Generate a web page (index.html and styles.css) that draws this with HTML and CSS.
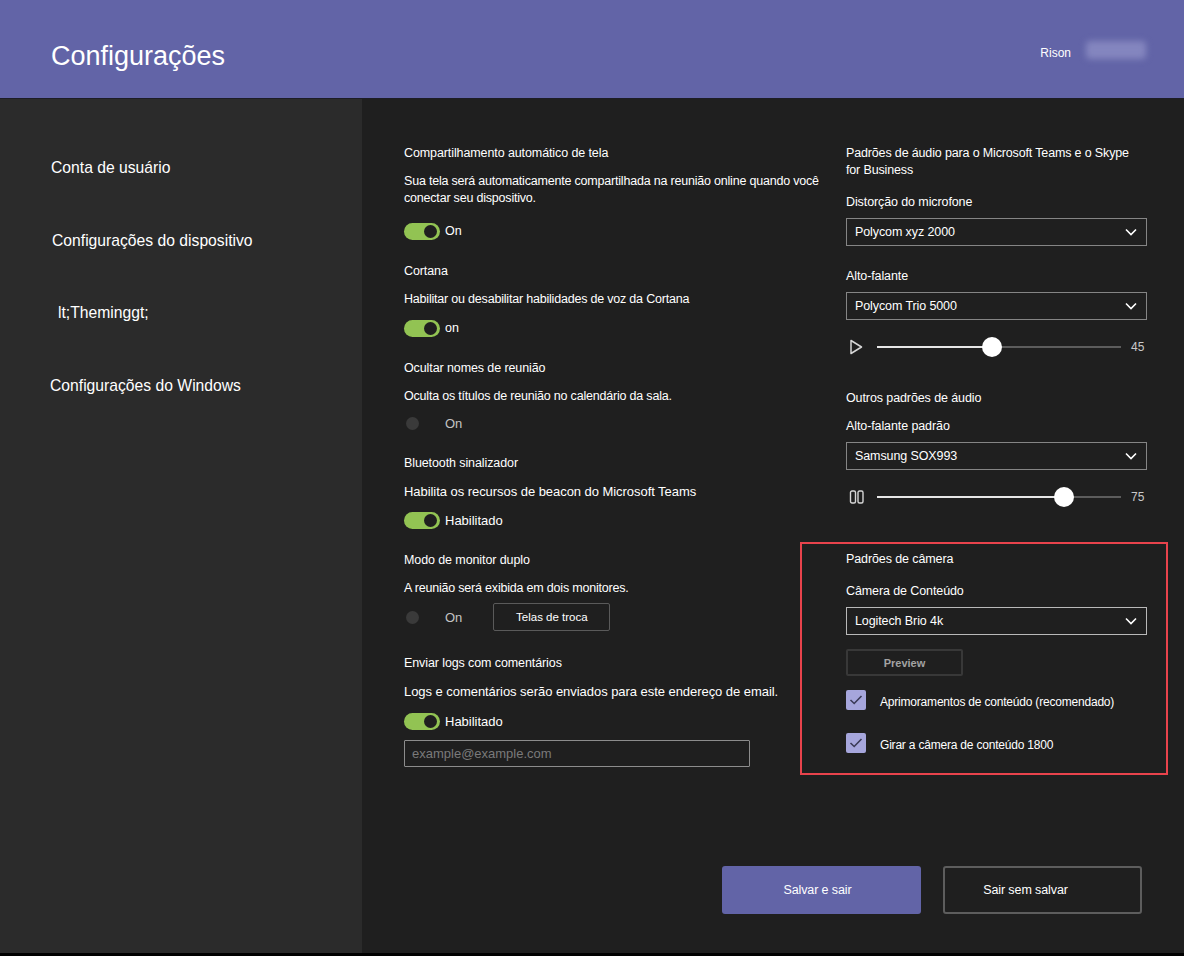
FILE: index.html
```html
<!DOCTYPE html>
<html lang="pt">
<head>
<meta charset="utf-8">
<title>Configurações</title>
<link rel="stylesheet" href="styles.css">
</head>
<body>
<div class="app">
  <header class="topbar">
    <h1 class="title">Configurações</h1>
    <div class="user">
      <span class="user-name">Rison</span>
      <span class="user-blur"></span>
    </div>
  </header>
  <div class="body">
    <nav class="sidebar">
      <div class="nav-item">Conta de usuário</div>
      <div class="nav-item nav-item-b">Configurações do dispositivo</div>
      <div class="nav-item nav-item-c">lt;Theminggt;</div>
      <div class="nav-item nav-item-d">Configurações do Windows</div>
    </nav>
    <main class="main">
      <div class="columns">
        <section class="col-left">
          <div class="setting">
            <div class="s-title">Compartilhamento automático de tela</div>
            <div class="s-desc">Sua tela será automaticamente compartilhada na reunião online quando você conectar seu dispositivo.</div>
            <div class="toggle-row toggle-row-first">
              <span class="toggle on"><span class="knob"></span></span>
              <span class="toggle-label">On</span>
            </div>
          </div>
          <div class="setting">
            <div class="s-title">Cortana</div>
            <div class="s-desc">Habilitar ou desabilitar habilidades de voz da Cortana</div>
            <div class="toggle-row">
              <span class="toggle on"><span class="knob"></span></span>
              <span class="toggle-label">on</span>
            </div>
          </div>
          <div class="setting">
            <div class="s-title">Ocultar nomes de reunião</div>
            <div class="s-desc">Oculta os títulos de reunião no calendário da sala.</div>
            <div class="toggle-row toggle-row-tight">
              <span class="toggle off"><span class="knob"></span></span>
              <span class="toggle-label muted">On</span>
            </div>
          </div>
          <div class="setting">
            <div class="s-title">Bluetooth sinalizador</div>
            <div class="s-desc s-desc-lg">Habilita os recursos de beacon do Microsoft Teams</div>
            <div class="toggle-row">
              <span class="toggle on"><span class="knob"></span></span>
              <span class="toggle-label lg">Habilitado</span>
            </div>
          </div>
          <div class="setting setting-dual">
            <div class="s-title">Modo de monitor duplo</div>
            <div class="s-desc">A reunião será exibida em dois monitores.</div>
            <div class="toggle-row">
              <span class="toggle off"><span class="knob"></span></span>
              <span class="toggle-label muted">On</span>
              <button class="btn-swap" type="button">Telas de troca</button>
            </div>
          </div>
          <div class="setting">
            <div class="s-title">Enviar logs com comentários</div>
            <div class="s-desc s-desc-lg">Logs e comentários serão enviados para este endereço de email.</div>
            <div class="toggle-row toggle-row-logs">
              <span class="toggle on"><span class="knob"></span></span>
              <span class="toggle-label lg">Habilitado</span>
            </div>
            <input class="email" type="text" placeholder="example@example.com">
          </div>
        </section>

        <section class="col-right">
          <div class="r-title">Padrões de áudio para o Microsoft Teams e o Skype for Business</div>
          <div class="label label-first">Distorção do microfone</div>
          <div class="select">
            <span>Polycom xyz 2000</span>
            <svg class="chev" width="12" height="8" viewBox="0 0 12 8"><path d="M1 1.5 L6 6.5 L11 1.5" fill="none" stroke="#ffffff" stroke-width="1.6"/></svg>
          </div>
          <div class="label label-gap">Alto-falante</div>
          <div class="select">
            <span>Polycom Trio 5000</span>
            <svg class="chev" width="12" height="8" viewBox="0 0 12 8"><path d="M1 1.5 L6 6.5 L11 1.5" fill="none" stroke="#ffffff" stroke-width="1.6"/></svg>
          </div>
          <div class="slider-row">
            <span class="slider-icon">
              <svg width="14" height="16" viewBox="0 0 14 16"><path d="M2 1.5 L12.5 8 L2 14.5 Z" fill="none" stroke="#d6d6d6" stroke-width="1.5" stroke-linejoin="round"/></svg>
            </span>
            <div class="slider">
              <div class="slider-fill" style="width:47%"></div>
              <div class="slider-thumb" style="left:47%"></div>
            </div>
            <span class="slider-value">45</span>
          </div>

          <div class="label label-section">Outros padrões de áudio</div>
          <div class="label label-sub">Alto-falante padrão</div>
          <div class="select">
            <span>Samsung SOX993</span>
            <svg class="chev" width="12" height="8" viewBox="0 0 12 8"><path d="M1 1.5 L6 6.5 L11 1.5" fill="none" stroke="#ffffff" stroke-width="1.6"/></svg>
          </div>
          <div class="slider-row">
            <span class="slider-icon">
              <svg width="16" height="14" viewBox="0 0 16 14"><rect x="1.5" y="1" width="5" height="12" rx="1.5" fill="none" stroke="#d6d6d6" stroke-width="1.4"/><rect x="9" y="1" width="5" height="12" rx="1.5" fill="none" stroke="#d6d6d6" stroke-width="1.4"/></svg>
            </span>
            <div class="slider">
              <div class="slider-fill" style="width:76.6%"></div>
              <div class="slider-thumb" style="left:76.6%"></div>
            </div>
            <span class="slider-value">75</span>
          </div>

          <div class="camera-box">
            <div class="label">Padrões de câmera</div>
            <div class="label label-first">Câmera de Conteúdo</div>
            <div class="select select-focus">
              <span>Logitech Brio 4k</span>
              <svg class="chev" width="12" height="8" viewBox="0 0 12 8"><path d="M1 1.5 L6 6.5 L11 1.5" fill="none" stroke="#ffffff" stroke-width="1.6"/></svg>
            </div>
            <button class="btn-preview" type="button">Preview</button>
            <div class="check-row">
              <span class="checkbox"><svg width="14" height="12" viewBox="0 0 14 12"><path d="M1.5 6 L5.2 9.5 L12.5 2" fill="none" stroke="#3a3a55" stroke-width="1.6"/></svg></span>
              <span class="check-label">Aprimoramentos de conteúdo (recomendado)</span>
            </div>
            <div class="check-row check-row-2">
              <span class="checkbox"><svg width="14" height="12" viewBox="0 0 14 12"><path d="M1.5 6 L5.2 9.5 L12.5 2" fill="none" stroke="#3a3a55" stroke-width="1.6"/></svg></span>
              <span class="check-label">Girar a câmera de conteúdo 1800</span>
            </div>
          </div>
        </section>
      </div>
      <div class="footer">
        <button class="btn btn-primary" type="button">Salvar e sair</button>
        <button class="btn btn-secondary" type="button">Sair sem salvar</button>
      </div>
    </main>
  </div>
</div>
</body>
</html>
```

FILE: styles.css
```css
* { box-sizing: border-box; }

html, body {
  margin: 0;
  padding: 0;
  background: #000000;
}

body {
  font-family: "Liberation Sans", Arial, sans-serif;
  color: #ffffff;
  width: 1184px;
  height: 956px;
  overflow: hidden;
}

.app {
  height: 953px;
  display: flex;
  flex-direction: column;
}

/* Header */
.topbar {
  height: 99px;
  flex: 0 0 99px;
  background: #6264a7;
  border-bottom: 1px solid #1d1d26;
  display: flex;
  justify-content: space-between;
  align-items: flex-start;
  padding: 0 38px 0 51px;
}

.title {
  margin: 40px 0 0 0;
  font-size: 27px;
  line-height: 32px;
  font-weight: normal;
  color: #ffffff;
}

.user {
  display: flex;
  align-items: center;
  margin-top: 43px;
  height: 20px;
}

.user-name {
  font-size: 12px;
  line-height: 20px;
  color: #ffffff;
}

.user-blur {
  display: block;
  width: 60px;
  height: 18px;
  margin-left: 15px;
  margin-top: -6px;
  background: #8486bf;
  border-radius: 4px;
  filter: blur(3px);
}

/* Body */
.body {
  flex: 1;
  display: flex;
  min-height: 0;
}

.sidebar {
  width: 362px;
  flex: 0 0 362px;
  background: #2b2b2b;
  padding: 59px 0 0 51px;
  display: flex;
  flex-direction: column;
  gap: 52.5px;
}

.nav-item {
  font-size: 15.7px;
  line-height: 20px;
  color: #ffffff;
  white-space: nowrap;
}

.nav-item-b { margin-left: 1px; }
.nav-item-c { margin-left: 7px; }
.nav-item-d { margin-left: -1px; }

.main {
  flex: 1;
  background: #1f1f1f;
  display: flex;
  flex-direction: column;
  padding: 46px 0 0 42px;
}

.columns {
  display: flex;
}

.col-left {
  width: 442px;
  flex: 0 0 442px;
}

.col-right {
  width: 301px;
  flex: 0 0 301px;
}

/* Left column */
.setting {
  margin-bottom: 22px;
}

.setting-dual {
  margin-bottom: 28px;
}

.s-title {
  font-size: 12.5px;
  line-height: 17px;
  letter-spacing: -0.1px;
  color: #ffffff;
}

.s-desc {
  margin-top: 11px;
  font-size: 12.5px;
  line-height: 17px;
  letter-spacing: -0.2px;
  color: #ffffff;
  width: 430px;
}

.s-desc-lg {
  font-size: 13px;
  letter-spacing: -0.05px;
}

.toggle-row {
  margin-top: 10px;
  height: 20px;
  display: flex;
  align-items: center;
}

.toggle-row-first { margin-top: 14px; }
.toggle-row-tight { margin-top: 8px; }
.toggle-row-logs { margin-top: 11px; }

.toggle {
  position: relative;
  display: block;
  width: 36px;
  height: 17px;
  border-radius: 9px;
  flex: 0 0 36px;
}

.toggle.on {
  background: #92c353;
}

.toggle.on .knob {
  position: absolute;
  right: 3px;
  top: 2px;
  width: 13px;
  height: 13px;
  border-radius: 50%;
  background: #1f1f1f;
}

.toggle.off {
  background: transparent;
}

.toggle.off .knob {
  position: absolute;
  left: 2px;
  top: 2px;
  width: 13px;
  height: 13px;
  border-radius: 50%;
  background: #3a3a3a;
}

.toggle-label {
  margin-left: 5px;
  font-size: 12.5px;
  color: #ffffff;
}

.toggle-label.lg {
  font-size: 13px;
}

.toggle-label.muted {
  margin-left: 5px;
  color: #c4c4c4;
  font-size: 13px;
}

.btn-swap {
  margin: -4px 0 -4px 31px;
  width: 117px;
  height: 28px;
  background: #1f1f1f;
  border: 1px solid #5a5a5a;
  border-radius: 2px;
  color: #ffffff;
  font-family: "Liberation Sans", Arial, sans-serif;
  font-size: 11.5px;
  padding: 0;
}

.email {
  display: block;
  margin-top: 9px;
  width: 346px;
  height: 27px;
  background: #1f1f1f;
  border: 1px solid #8c8c8c;
  border-radius: 1px;
  color: #ffffff;
  font-family: "Liberation Sans", Arial, sans-serif;
  font-size: 13px;
  padding: 0 7px;
  outline: none;
}

.email::placeholder {
  color: #7a7a7a;
}

/* Right column */
.r-title {
  font-size: 12.5px;
  line-height: 17px;
  letter-spacing: -0.15px;
  color: #ffffff;
  width: 292px;
}

.label {
  font-size: 12.5px;
  line-height: 17px;
  letter-spacing: -0.1px;
  color: #ffffff;
}

.label-first { margin-top: 15px; }
.label-gap { margin-top: 22px; }
.label-section { margin-top: 33px; }
.label-sub { margin-top: 11px; }

.select {
  margin-top: 7px;
  height: 28px;
  border: 1px solid #858585;
  background: #1f1f1f;
  display: flex;
  align-items: center;
  justify-content: space-between;
  padding: 0 9px 0 8px;
  font-size: 12.5px;
  letter-spacing: -0.1px;
  color: #ffffff;
}

.select-focus {
  border-color: #b9b9b9;
}

.chev {
  display: block;
}

.slider-row {
  margin-top: 17px;
  height: 20px;
  display: flex;
  align-items: center;
}

.slider-icon {
  width: 31px;
  flex: 0 0 31px;
  display: flex;
  align-items: center;
  padding-left: 3px;
}

.slider {
  position: relative;
  width: 244px;
  height: 2px;
  background: #5c5c5c;
}

.slider-fill {
  height: 2px;
  background: #e6e6e6;
}

.slider-thumb {
  position: absolute;
  top: -9px;
  width: 20px;
  height: 20px;
  margin-left: -10px;
  border-radius: 50%;
  background: #ffffff;
}

.slider-value {
  margin-left: 10px;
  font-size: 12px;
  color: #c9c9c9;
}

/* Camera box (highlight annotation) */
.camera-box {
  margin: 35px -21px 0 -46px;
  border: 2px solid #e8434c;
  padding: 7px 19px 20px 44px;
}

.btn-preview {
  display: block;
  margin-top: 14px;
  width: 117px;
  height: 27px;
  background: #1f1f1f;
  border: 2px solid #383838;
  border-radius: 2px;
  color: #a3a3a3;
  font-family: "Liberation Sans", Arial, sans-serif;
  font-weight: bold;
  font-size: 11px;
  padding: 0;
}

.check-row {
  margin-top: 14px;
  height: 20px;
  display: flex;
  align-items: center;
}

.check-row-2 {
  margin-top: 23px;
}

.checkbox {
  width: 20px;
  height: 20px;
  flex: 0 0 20px;
  background: #a6a6dc;
  border-radius: 2px;
  display: flex;
  align-items: center;
  justify-content: center;
}

.check-label {
  margin-left: 14px;
  margin-top: 3px;
  font-size: 12px;
  letter-spacing: -0.2px;
  color: #ffffff;
}

/* Footer */
.footer {
  margin-top: auto;
  display: flex;
  justify-content: flex-end;
  gap: 22px;
  padding: 0 42px 39px 0;
}

.btn {
  width: 199px;
  height: 48px;
  border-radius: 3px;
  font-family: "Liberation Sans", Arial, sans-serif;
  font-size: 12.5px;
  letter-spacing: -0.1px;
  color: #ffffff;
  padding: 0;
}

.btn-primary {
  background: #6264a7;
  border: none;
  padding-right: 8px;
}

.btn-secondary {
  background: #1f1f1f;
  border: 2px solid #5d5d5d;
  padding-right: 34px;
}
```
